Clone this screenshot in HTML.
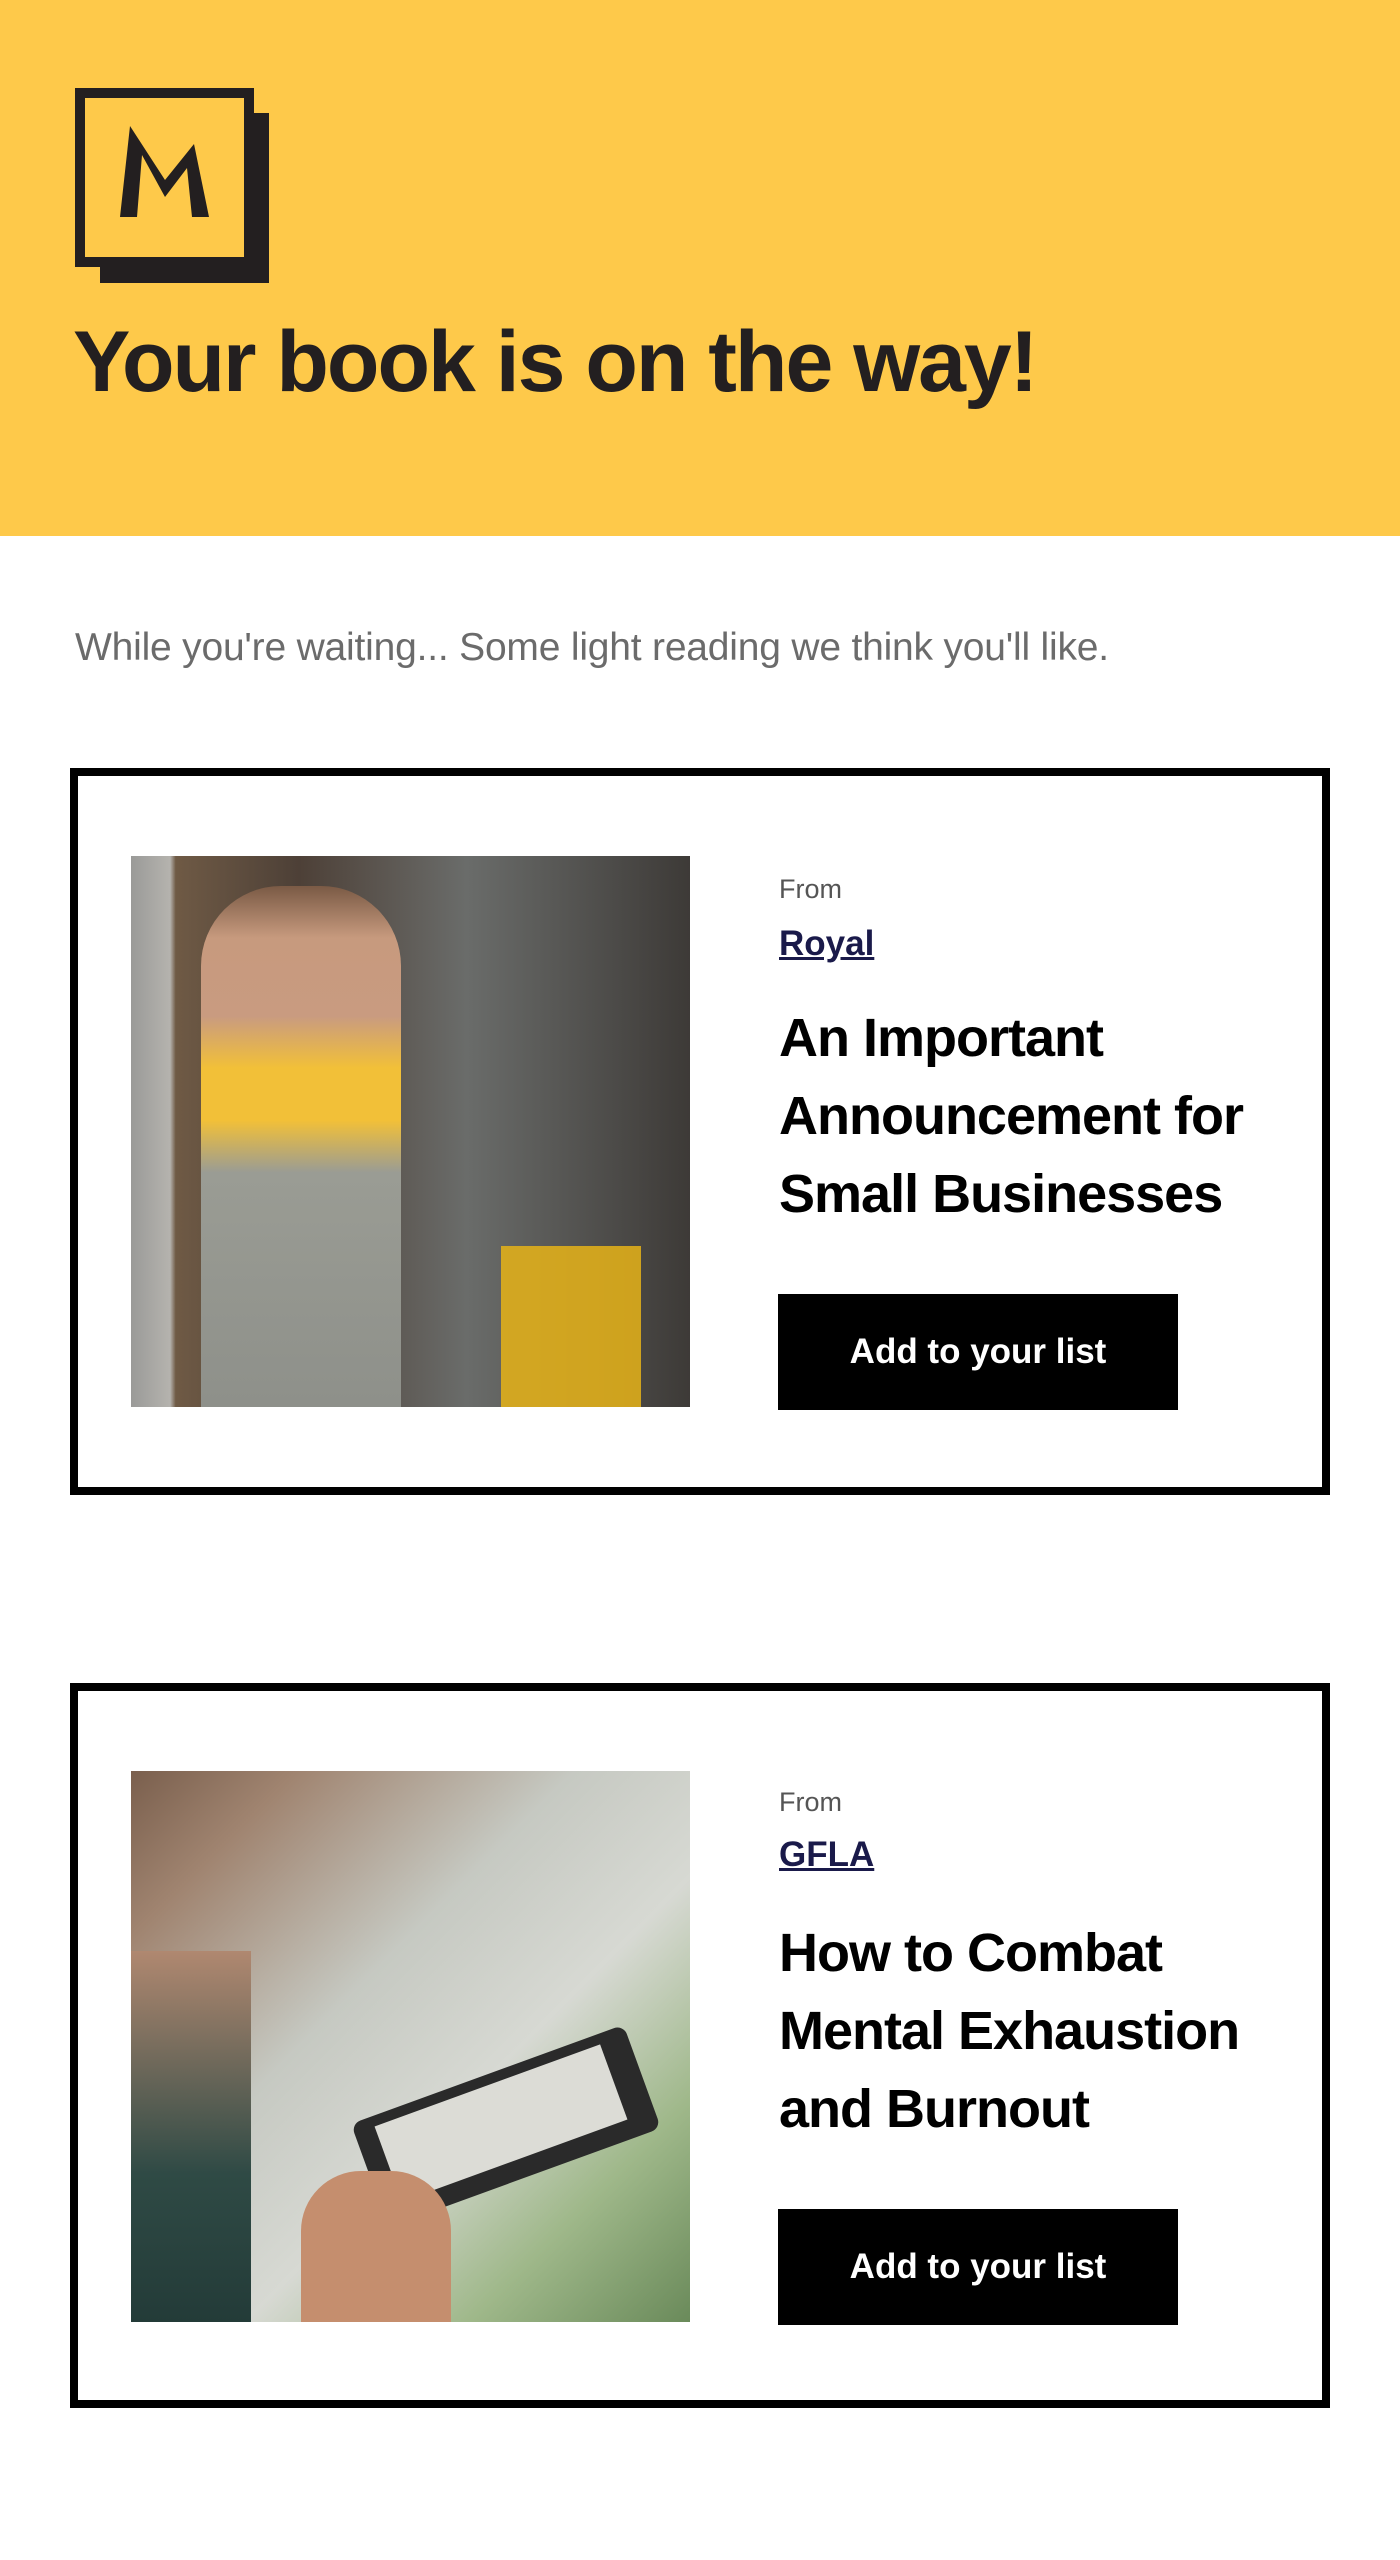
<!DOCTYPE html>
<html><head><meta charset="utf-8"><style>
*{margin:0;padding:0;box-sizing:border-box}
body{width:1400px;height:2560px;background:#fff;font-family:"Liberation Sans",sans-serif;position:relative;overflow:hidden}
.hdr{position:absolute;left:0;top:0;width:1400px;height:536px;background:#FEC94A}
h1{position:absolute;left:73px;top:313px;font-size:86px;font-weight:bold;color:#231f20;letter-spacing:-2px;white-space:nowrap}
.sub{position:absolute;left:75px;top:626px;font-size:39px;color:#6b6b6b;white-space:nowrap;letter-spacing:-0.2px}
.card{position:absolute;left:70px;width:1260px;border:8px solid #000}
.img{position:absolute;left:53px;top:80px;width:559px;height:551px;overflow:hidden}
.from{position:absolute;left:701px;font-size:27px;color:#555}
.src{position:absolute;left:701px;font-size:35px;color:#1a1a4a;font-weight:bold;text-decoration:underline}
.ttl{position:absolute;left:701px;font-size:54px;font-weight:bold;line-height:78px;color:#000;letter-spacing:-1px;white-space:nowrap}
.btn{position:absolute;left:700px;width:400px;height:116px;background:#000;color:#fff;font-size:35px;font-weight:bold;text-align:center;line-height:116px}
</style></head><body>
<div class="hdr">
<svg style="position:absolute;left:0;top:0" width="300" height="300">
<rect x="100" y="113" width="169" height="170" fill="#231f20"/>
<rect x="80" y="93" width="169" height="169" fill="#FEC94A" stroke="#231f20" stroke-width="10"/>
<polygon points="120,217 137,217 142,155 165,197 187,168 192,217 209,217 194,144 165,180 130,126" fill="#231f20"/>
</svg>
<h1>Your book is on the way!</h1>
</div>
<div class="sub">While you're waiting... Some light reading we think you'll like.</div>

<div class="card" style="top:768px;height:727px">
<div class="img" style="background:linear-gradient(90deg,#9a9a98 0,#b5b3ae 7%,#6f5a45 8%,#4d4037 30%,#6a6c6a 60%,#3d3a37 100%)">
<div style="position:absolute;left:70px;top:30px;width:200px;height:521px;background:linear-gradient(180deg,#7a5a45 0,#c79a7e 10%,#c99b80 25%,#f2c038 35%,#f2c038 45%,#9a9c94 55%,#8e908a 100%);border-radius:80px 80px 0 0"></div>
<div style="position:absolute;left:370px;top:390px;width:140px;height:161px;background:#e6b318;opacity:.85"></div>
</div>
<div class="from" style="top:98px">From</div>
<div class="src" style="top:148px">Royal</div>
<div class="ttl" style="top:223px">An Important<br>Announcement for<br>Small Businesses</div>
<div class="btn" style="top:518px">Add to your list</div>
</div>

<div class="card" style="top:1683px;height:725px">
<div class="img" style="background:linear-gradient(135deg,#7a5f4d 0,#a08470 15%,#c6c9c2 40%,#d7d9d3 60%,#9fb88a 80%,#6a8a5a 100%)">
<div style="position:absolute;left:0;top:180px;width:120px;height:371px;background:linear-gradient(180deg,#b08870 0,#2f4a45 60%,#233b38 100%)"></div>
<div style="position:absolute;left:230px;top:300px;width:290px;height:110px;background:#2a2a2a;transform:rotate(-20deg);border-radius:10px"></div>
<div style="position:absolute;left:250px;top:312px;width:240px;height:80px;background:#dcdcd6;transform:rotate(-20deg)"></div>
<div style="position:absolute;left:170px;top:400px;width:150px;height:151px;background:#c58e6e;border-radius:60px 60px 0 0"></div>
</div>
<div class="from" style="top:96px">From</div>
<div class="src" style="top:144px">GFLA</div>
<div class="ttl" style="top:223px">How to Combat<br>Mental Exhaustion<br>and Burnout</div>
<div class="btn" style="top:518px">Add to your list</div>
</div>
</body></html>
